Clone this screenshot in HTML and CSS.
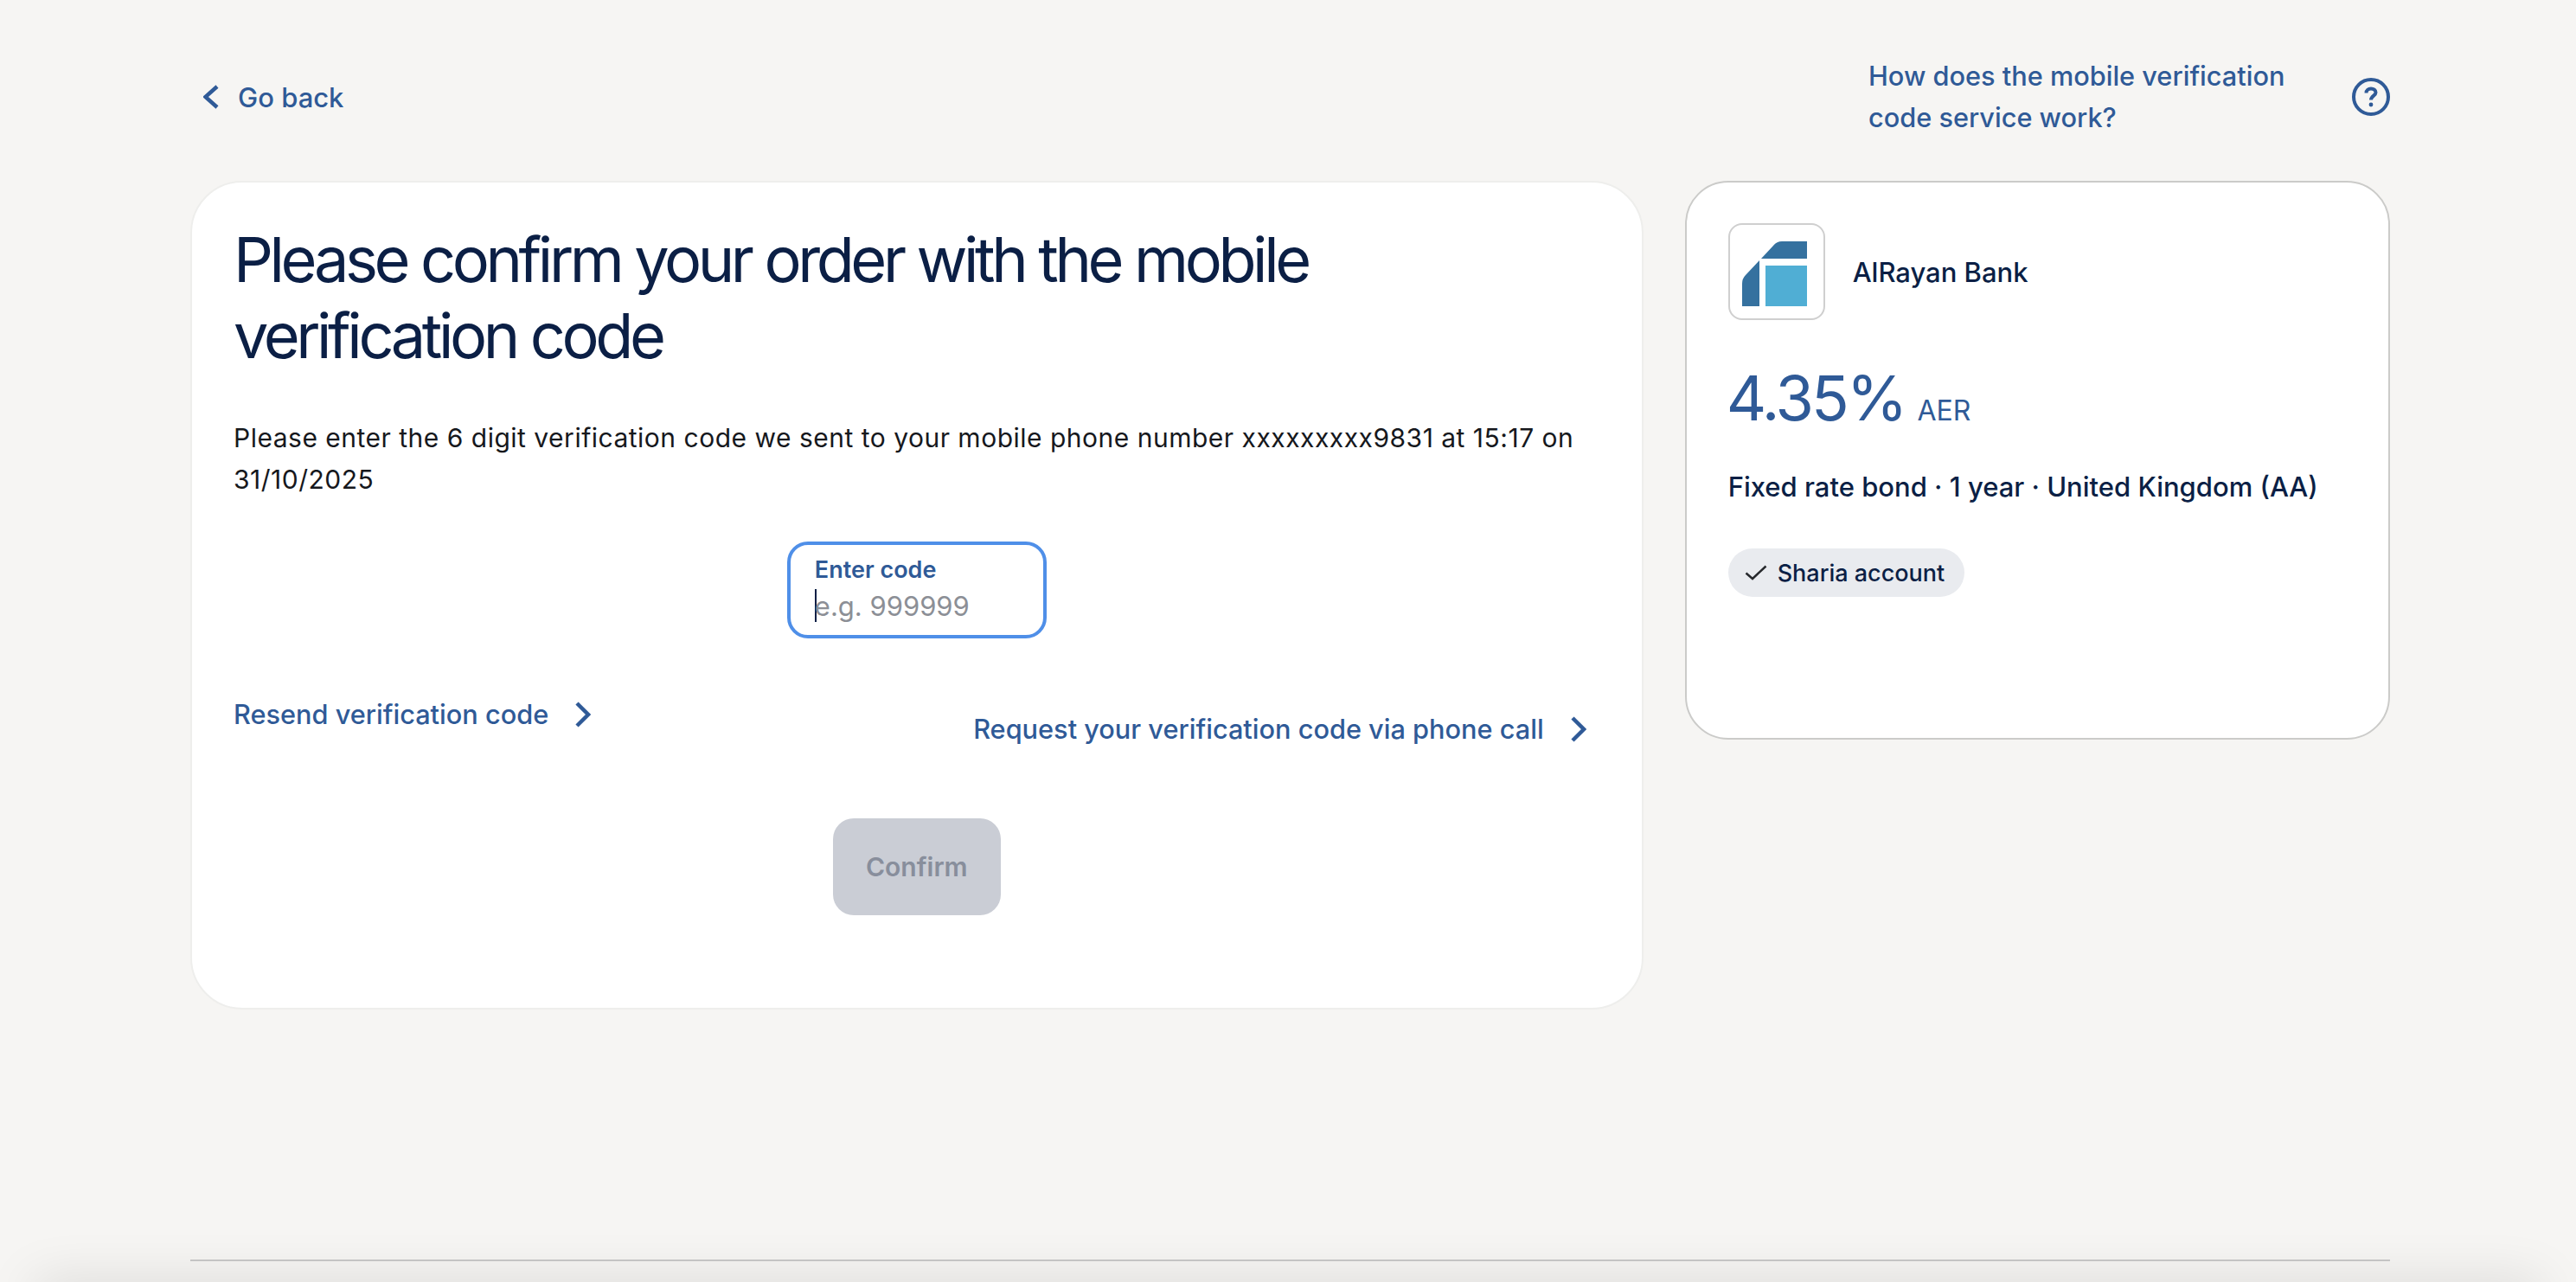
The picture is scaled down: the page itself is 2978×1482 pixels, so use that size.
FILE: index.html

```html
<!DOCTYPE html>
<html lang="en">

<head>
    <meta charset="UTF-8">
    <meta name="viewport" content="width=device-width, initial-scale=1.0">
    <title>Confirm your order</title>
    <link rel="stylesheet" href="styles.css">
</head>

<body>
    <div class="page">
        <header class="top-bar">
            <a class="back-link" href="#">
                <svg class="chevron" viewBox="0 0 18 28" width="18" height="28"><path d="M16 2 L2.5 14 L16 26"/></svg>
                Go back
            </a>
            <a class="help-link" href="#">
                <span class="help-text">How does the mobile verification code service work?</span>
                <svg class="help-icon" viewBox="0 0 44 44" width="44" height="44">
                    <circle cx="22" cy="22" r="20"/>
                    <path d="M16.5 17.5 C16.5 14 19 12.5 22 12.5 C25 12.5 27.5 14.2 27.5 17 C27.5 20.5 22 20.8 22 25.5"/>
                    <circle class="help-dot" cx="22" cy="31" r="2.4"/>
                </svg>
            </a>
        </header>

        <div class="columns">
            <main class="card confirm-card">
                <h1>Please confirm your order with the mobile verification code</h1>
                <p class="intro">Please enter the 6 digit verification code we sent to your mobile phone number xxxxxxxxx9831 at 15:17 on 31/10/2025</p>

                <div class="code-field">
                    <label class="code-label">Enter code</label>
                    <div class="code-input"><span class="caret"></span><span class="placeholder">e.g. 999999</span></div>
                </div>

                <div class="link-row">
                    <a class="action-link" href="#">
                        Resend verification code
                        <svg class="chevron" viewBox="0 0 18 30" width="18" height="30"><path d="M2 2 L15 15 L2 28"/></svg>
                    </a>
                    <a class="action-link phone-link" href="#">
                        Request your verification code via phone call
                        <svg class="chevron" viewBox="0 0 18 30" width="18" height="30"><path d="M2 2 L15 15 L2 28"/></svg>
                    </a>
                </div>

                <div class="button-row">
                    <button class="confirm-button" disabled>Confirm</button>
                </div>
            </main>

            <aside class="card product-card">
                <div class="bank">
                    <div class="bank-logo">
                        <svg viewBox="0 0 75 75" width="75" height="75">
                            <path class="logo-dark" d="M22 20 L36 5 Q40 0 46 0 L75 0 L75 20 Z"/>
                            <path class="logo-dark" d="M0 75 L0 49 Q0 43 4 39 L20 22 L20 75 Z"/>
                            <rect class="logo-light" x="27" y="28" width="48" height="47"/>
                        </svg>
                    </div>
                    <span class="bank-name">AlRayan Bank</span>
                </div>
                <div class="rate"><span class="rate-value">4.35%</span><span class="rate-type">AER</span></div>
                <p class="product-desc">Fixed rate bond · 1 year · United Kingdom (AA)</p>
                <span class="badge">
                    <svg viewBox="0 0 26 18" width="26" height="18"><path d="M1.5 9.5 L9 16 L24.5 1.5"/></svg>
                    Sharia account
                </span>
            </aside>
        </div>

        <footer class="footer-line"></footer>
    </div>
    <div class="bottom-shade"></div>
</body>

</html>
```

FILE: styles.css

```css
body {
    margin: 0;
    height: 1482px;
    overflow: hidden;
    position: relative;
    background-color: #f6f5f3;
    font-family: 'Inter', 'Liberation Sans', sans-serif;
    color: #0b1f45;
}

a {
    color: #2f5a97;
    text-decoration: none;
}

.page {
    height: 1482px;
    box-sizing: border-box;
    padding: 64px 215px 0 220px;
    display: flex;
    flex-direction: column;
}

.chevron {
    fill: none;
    stroke: #2f5a97;
    stroke-width: 4.5;
    flex: none;
}

/* top bar */
.top-bar {
    display: flex;
    justify-content: space-between;
    align-items: center;
    margin-bottom: 49px;
}

.back-link {
    display: flex;
    align-items: center;
    gap: 22px;
    margin-left: 15px;
    font-size: 31px;
    font-weight: 500;
}

.help-link {
    display: flex;
    align-items: center;
    gap: 69px;
    font-size: 30.7px;
    font-weight: 500;
    line-height: 48px;
}

.help-text {
    width: 490px;
}

.help-icon {
    fill: none;
    stroke: #2f5a97;
    stroke-width: 4;
}

.help-dot {
    fill: #2f5a97;
    stroke: none;
}

/* cards */
.columns {
    display: flex;
    align-items: flex-start;
    gap: 48px;
}

.card {
    box-sizing: border-box;
    background: #fff;
}

.confirm-card {
    width: 1681px;
    height: 958px;
    padding: 45px 48px 0 48px;
    border: 2px solid #eeeeec;
    border-radius: 60px;
}

h1 {
    margin: 0;
    width: 1400px;
    font-size: 72px;
    font-weight: 400;
    line-height: 88px;
    letter-spacing: -4.4px;
    color: #0b1f45;
}

.intro {
    margin: 50px 0 48px;
    font-size: 30px;
    letter-spacing: 0.5px;
    line-height: 48px;
    color: #16181d;
}

.code-field {
    box-sizing: border-box;
    width: 300px;
    height: 112px;
    margin: 0 auto;
    padding: 12px 28px;
    border: 4px solid #4f8fe8;
    border-radius: 24px;
}

.code-label {
    display: block;
    font-size: 27px;
    font-weight: 600;
    line-height: 34px;
    color: #2f5a97;
}

.code-input {
    display: flex;
    align-items: center;
    height: 48px;
    font-size: 31px;
    color: #8c8f96;
}

.caret {
    width: 2px;
    height: 38px;
    margin-right: -2px;
    background: #0b1f45;
}

.link-row {
    display: flex;
    justify-content: space-between;
    align-items: flex-start;
    margin-top: 69px;
    padding-right: 16px;
}

.action-link {
    display: flex;
    align-items: center;
    gap: 31px;
    font-size: 30.7px;
    font-weight: 500;
    line-height: 38px;
}

.phone-link {
    margin-top: 17px;
}

.button-row {
    display: flex;
    justify-content: center;
    margin-top: 84px;
}

.confirm-button {
    width: 194px;
    height: 112px;
    border: 0;
    border-radius: 24px;
    background: #cacdd5;
    font-family: inherit;
    font-size: 30px;
    font-weight: 600;
    color: #888e9c;
}

.product-card {
    width: 816px;
    height: 646px;
    padding: 47px 48px 0 48px;
    border: 2px solid #cbcbc9;
    border-radius: 50px;
}

.bank {
    display: flex;
    align-items: center;
    gap: 32px;
}

.bank-logo {
    box-sizing: border-box;
    width: 112px;
    height: 112px;
    display: flex;
    align-items: center;
    justify-content: center;
    border: 2px solid #cfcfcf;
    border-radius: 16px;
}

.bank-logo svg {
    margin: 4px 4px 0 0;
}

.logo-dark {
    fill: #35719f;
}

.logo-light {
    fill: #50aed4;
}

.bank-name {
    font-size: 31px;
    font-weight: 500;
}

.rate {
    display: flex;
    align-items: baseline;
    gap: 14px;
    margin-top: 46px;
    margin-left: -2px;
    color: #2f5a97;
}

.rate-value {
    font-size: 72px;
    line-height: 88px;
    letter-spacing: -3px;
}

.rate-type {
    font-size: 32px;
}

.product-desc {
    margin: 35px 0 0;
    font-size: 31px;
    font-weight: 500;
    line-height: 48px;
}

.badge {
    display: inline-flex;
    align-items: center;
    gap: 12px;
    height: 56px;
    margin-top: 47px;
    padding: 0 23px 0 19px;
    border-radius: 28px;
    background: #e9ebef;
    font-size: 27px;
    font-weight: 500;
}

.badge svg {
    fill: none;
    stroke: #26282c;
    stroke-width: 2.5;
}

/* footer */
.footer-line {
    margin-top: auto;
    margin-bottom: 24px;
    border-top: 2px solid #c9c9c9;
}

/* shadow from the bar sitting below the fold */
.bottom-shade {
    position: absolute;
    top: 100%;
    left: 40px;
    right: 40px;
    height: 40px;
    box-shadow: 0 0 60px rgba(0, 0, 0, 0.13);
}
```
